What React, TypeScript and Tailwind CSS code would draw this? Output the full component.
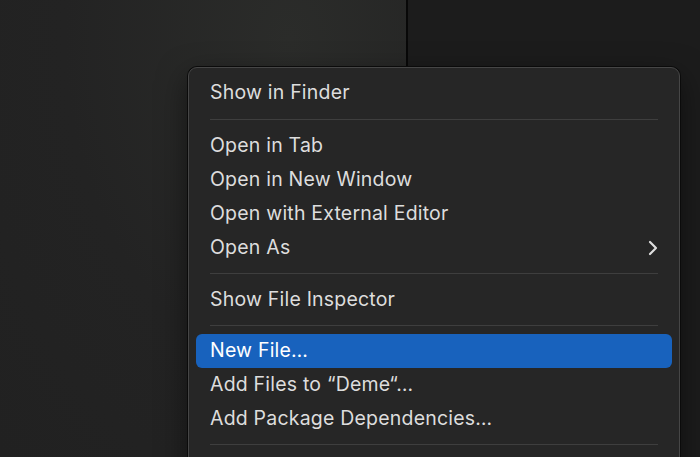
import React from "react";

type Entry =
  | { label: string; active?: boolean; submenu?: boolean }
  | { sep: string };

const entries: Entry[] = [
  { label: "Show in Finder" },
  { sep: "pt-[9px] pb-[9px]" },
  { label: "Open in Tab" },
  { label: "Open in New Window" },
  { label: "Open with External Editor" },
  { label: "Open As", submenu: true },
  { sep: "pt-[8px] pb-[9px]" },
  { label: "Show File Inspector" },
  { sep: "pt-[8px] pb-[8px]" },
  { label: "New File…", active: true },
  { label: "Add Files to “Deme“…" },
  { label: "Add Package Dependencies…" },
  { sep: "pt-[8px] pb-[8px]" },
];

const Chevron = () => (
  <svg width="10" height="16" viewBox="0 0 10 16" fill="none">
    <path
      d="M2 2 L8 8 L2 14"
      stroke="#dedede"
      strokeWidth="2.2"
      strokeLinecap="round"
      strokeLinejoin="round"
    />
  </svg>
);

export default function App() {
  return (
    <div
      className="relative h-[457px] w-[700px] overflow-hidden bg-[#1c1c1c]"
      style={{ fontFamily: "Inter, 'Noto Sans', sans-serif" }}
    >
      <div className="flex h-full">
        <div className="h-full w-[406px] bg-[radial-gradient(ellipse_at_290px_40px,#2b2c2a_0%,#232323_55%,#212121_100%)]" />
        <div className="h-full w-[2px] bg-[#080808]" />
        <div className="h-full flex-1 bg-[#1c1c1c]" />
      </div>

      {/* context menu */}
      <div className="absolute left-[188px] top-[67px] w-[492px] rounded-[9px] border border-[#464646] bg-[#262626] px-[7px] pt-[8px] pb-10 shadow-[0_0_0_1px_#0b0b0b,0_10px_30px_rgba(0,0,0,0.5)]">
        {entries.map((e, i) =>
          "sep" in e ? (
            <div key={i} className={`px-[14px] ${e.sep}`}>
              <div className="h-px bg-[#3e3e3e]" />
            </div>
          ) : (
            <div
              key={i}
              className={`flex h-[34px] items-center justify-between rounded-[6px] px-[14px] text-[19.5px] tracking-[0.2px] ${
                e.active ? "bg-[#1862bd] text-white" : "text-[#dddddd]"
              }`}
            >
              <span>{e.label}</span>
              {e.submenu && <Chevron />}
            </div>
          )
        )}
      </div>
    </div>
  );
}
